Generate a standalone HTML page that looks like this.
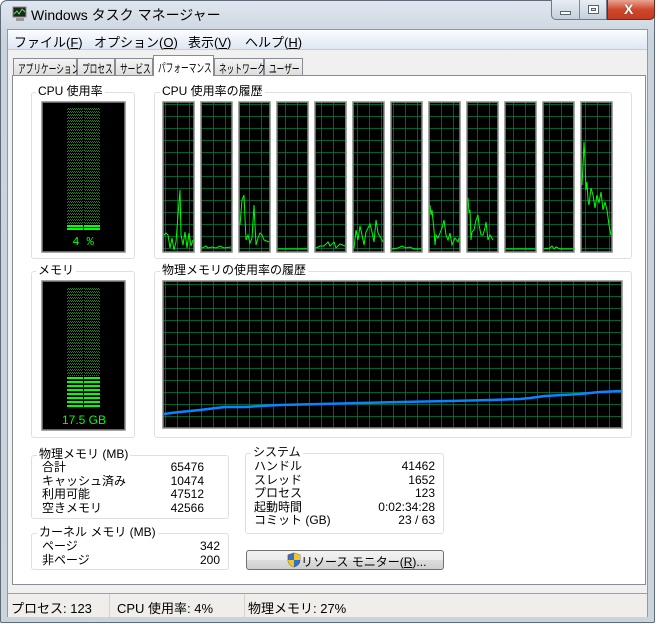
<!DOCTYPE html><html><head><meta charset="utf-8"><style>
*{margin:0;padding:0;box-sizing:border-box}
body{width:661px;height:624px;background:#fff;font-family:"Liberation Sans","Noto Sans CJK JP",sans-serif;font-size:12px;color:#000;position:relative;overflow:hidden}
.a{position:absolute}
.win{left:0;top:0;width:655px;height:623px;border:1px solid #5d6a78;border-radius:7px 7px 2px 2px;background:linear-gradient(#dfe6ee,#c9d3de 40px,#cbd3dc);}
.inner{left:7px;top:29px;width:641px;height:588px;background:#f0f0f0;border:1px solid #8e9aa8}
.menu{left:8px;top:30px;width:639px;height:20px;background:linear-gradient(#fbfcfe,#dfe7f4);border-bottom:1px solid #c5cdd8;font-size:13px}
.menu span{position:absolute;top:2px}
.tab{top:58px;height:18px;background:linear-gradient(#f4f4f4,#dcdcdc);border:1px solid #898c95;border-bottom:none;font-size:12px;white-space:nowrap;overflow:visible}
.tab span{position:absolute;left:4px;top:1px;white-space:nowrap;transform:scaleX(.64);transform-origin:0 0}
.pane{left:12px;top:75px;width:634px;height:510px;background:#fff;border:1px solid #898c95}
.grp{border:1px solid #dcdfe4;border-radius:3px}
.gl{background:#fff;padding:0 2px;font-size:12px;line-height:13px;white-space:nowrap}
.row{font-size:12px;line-height:13.5px;white-space:nowrap}
.status{left:8px;top:593px;width:639px;height:24px;background:#f0eeeb;border-top:1px solid #a0a0a0;font-size:13px}
</style></head><body>
<div class="a win"></div>
<svg class="a" style="left:11px;top:6px" width="16" height="16"><rect x="2" y="1" width="13" height="10" fill="#222" stroke="#888"/><polyline points="3,8 6,5 8,8 11,3 14,6" stroke="#3f3" fill="none"/><rect x="5" y="12" width="8" height="3" fill="#999"/></svg>
<div class="a" style="left:31px;top:5px;font-size:14px;color:#000">Windows タスク マネージャー</div>
<div class="a" style="left:551px;top:0;width:56px;height:20px;border:1px solid #6f7b8a;border-top:none;border-radius:0 0 0 5px;background:linear-gradient(#e9eef4,#c4cfdb)"></div>
<div class="a" style="left:579px;top:0;width:1px;height:20px;background:#7c8896"></div>
<div class="a" style="left:560px;top:11px;width:11px;height:4px;background:#fff;border:1px solid #5a6470"></div>
<div class="a" style="left:588px;top:5px;width:11px;height:9px;background:#fff;border:1px solid #5a6470"><div style="margin:2px;width:5px;height:3px;border:1px solid #5a6470;background:#dde"></div></div>
<div class="a" style="left:607px;top:0;width:48px;height:20px;border:1px solid #6a2a20;border-top:none;border-radius:0 0 5px 0;background:linear-gradient(#e8a493,#d0482c 50%,#c23b20)"></div>
<div class="a" style="left:624px;top:1px;color:#fff;font-weight:bold;font-size:14px;text-shadow:0 0 1px #333">X</div>
<div class="a inner"></div>
<div class="a menu"><span style="left:6px">ファイル(<u>F</u>)</span><span style="left:86px">オプション(<u>O</u>)</span><span style="left:180px">表示(<u>V</u>)</span><span style="left:237px">ヘルプ(<u>H</u>)</span></div>
<div class="a tab" style="left:13px;width:64px"><span>アプリケーション</span></div>
<div class="a tab" style="left:77px;width:38px"><span>プロセス</span></div>
<div class="a tab" style="left:115px;width:38px"><span>サービス</span></div>
<div class="a tab" style="left:153px;width:61px;top:55px;height:21px;background:#fff;z-index:2"><span style="top:3px">パフォーマンス</span></div>
<div class="a tab" style="left:214px;width:50px"><span>ネットワーク</span></div>
<div class="a tab" style="left:264px;width:39px"><span>ユーザー</span></div>
<div class="a pane"></div>
<div class="a grp" style="left:31px;top:92px;width:104px;height:167px"></div>
<div class="a gl" style="left:36px;top:85px">CPU 使用率</div>
<div class="a grp" style="left:154px;top:92px;width:478px;height:167px"></div>
<div class="a gl" style="left:160px;top:85px">CPU 使用率の履歴</div>
<div class="a grp" style="left:31px;top:271px;width:104px;height:167px"></div>
<div class="a gl" style="left:36px;top:264px">メモリ</div>
<div class="a grp" style="left:154px;top:271px;width:478px;height:167px"></div>
<div class="a gl" style="left:160px;top:264px">物理メモリの使用率の履歴</div>
<svg class="a" style="left:0;top:0" width="661" height="624">
<defs>
<pattern id="g" x="165" y="104" width="12" height="12" patternUnits="userSpaceOnUse"><rect width="12" height="12" fill="#000"/><path d="M0 0H12M0 0V12" stroke="#008040" stroke-width="1.5" fill="none"/></pattern>
<pattern id="d" x="0" y="0" width="2" height="3" patternUnits="userSpaceOnUse"><rect width="2" height="3" fill="#000"/><rect width="1" height="1" fill="#2a7a2a"/><rect x="1" y="1" width="1" height="1" fill="#2a7a2a"/></pattern>
</defs>
<rect x="42" y="102" width="83" height="150" fill="#000" stroke="#888" stroke-width="1.5"/>
<rect x="67" y="108" width="16" height="116" fill="url(#d)"/><rect x="84" y="108" width="16" height="116" fill="url(#d)"/>
<rect x="67" y="225" width="16" height="2" fill="#0f0"/><rect x="84" y="225" width="16" height="2" fill="#0f0"/>
<rect x="67" y="228" width="16" height="2" fill="#0f0"/><rect x="84" y="228" width="16" height="2" fill="#0f0"/>
<text x="83" y="245" fill="#0f0" font-size="12" text-anchor="middle" font-family="Liberation Mono">4 %</text>
<rect x="42" y="281" width="83" height="149" fill="#000" stroke="#888" stroke-width="1.5"/>
<rect x="67" y="287" width="16" height="89" fill="url(#d)"/><rect x="84" y="287" width="16" height="89" fill="url(#d)"/>
<g fill="#0f0">
<rect x="67" y="377" width="16" height="2"/><rect x="84" y="377" width="16" height="2"/>
<rect x="67" y="381" width="16" height="2"/><rect x="84" y="381" width="16" height="2"/>
<rect x="67" y="385" width="16" height="2"/><rect x="84" y="385" width="16" height="2"/>
<rect x="67" y="389" width="16" height="2"/><rect x="84" y="389" width="16" height="2"/>
<rect x="67" y="393" width="16" height="2"/><rect x="84" y="393" width="16" height="2"/>
<rect x="67" y="397" width="16" height="2"/><rect x="84" y="397" width="16" height="2"/>
<rect x="67" y="401" width="16" height="2"/><rect x="84" y="401" width="16" height="2"/>
<rect x="67" y="405" width="16" height="2"/><rect x="84" y="405" width="16" height="2"/>
</g>
<text x="84" y="424" fill="#0f0" font-size="12" text-anchor="middle">17.5 GB</text>
<g stroke="#888" stroke-width="1.5" fill="url(#g)">
<rect x="163" y="102" width="31" height="150"/><rect x="201" y="102" width="31" height="150"/><rect x="239" y="102" width="31" height="150"/><rect x="277" y="102" width="31" height="150"/><rect x="315" y="102" width="31" height="150"/><rect x="353" y="102" width="31" height="150"/><rect x="391" y="102" width="31" height="150"/><rect x="429" y="102" width="31" height="150"/><rect x="467" y="102" width="31" height="150"/><rect x="505" y="102" width="31" height="150"/><rect x="543" y="102" width="31" height="150"/><rect x="581" y="102" width="31" height="150"/>
</g>
<g stroke="#0f0" stroke-width="1" fill="none">
<polyline points="164,235 166,233 168,235 170,248 172,238 174,250 176,242 178,215 180,190 181,235 183,245 185,232 187,248 189,233 191,246 193,240"/>
<polyline points="202,248 206,246 208,248 212,247 216,248 220,246 224,248 231,247"/>
<polyline points="240,225 242,200 244,195 246,240 248,235 250,243 252,238 254,205 256,245 258,238 260,233 262,235 264,240 269,242"/>
<polyline points="278,249 307,249"/><polyline points="316,248 320,246 324,246 328,242 330,246 334,242 336,248 340,244 345,246"/>
<polyline points="354,248 356,230 358,240 360,226 362,235 364,245 366,232 370,224 372,232 374,242 376,220 378,233 382,240 383,242"/>
<polyline points="392,249 398,248 402,246 406,248 410,247 414,249 421,249"/>
<polyline points="430,205 431,215 432,210 434,230 435,245 436,235 438,238 440,233 442,228 444,220 446,235 448,240 450,233 452,245 455,238 458,242 459,238"/>
<polyline points="468,198 469,212 470,210 471,240 472,232 474,230 476,220 478,215 479,225 481,235 483,235 485,228 486,222 488,240 490,235 493,240"/>
<polyline points="506,249 535,249"/><polyline points="544,249 550,248 552,246 554,249 556,247 560,249 573,249"/>
<polyline points="582,185 583,165 584,142 585,160 586,190 587,182 588,200 589,205 591,188 593,195 595,208 597,195 599,203 601,192 603,210 605,202 607,210 609,225 611,235"/>
</g>
<rect x="163" y="281" width="459" height="147" fill="url(#g)" stroke="#888" stroke-width="1.5"/>
<polyline points="164,414 171,413 180,412 190,411 200,410 216,408 225,407 245,407 260,406 280,405 320,404 360,403 400,402 450,401 490,400 520,399 530,398 545,396 580,394 600,392 621,391" stroke="#0a84ff" stroke-width="2.5" fill="none"/>
</svg>
<div class="a grp" style="left:31px;top:455px;width:198px;height:64px"></div>
<div class="a gl" style="left:37px;top:448px">物理メモリ (MB)</div>
<div class="a row" style="left:42px;top:461px">合計<br>キャッシュ済み<br>利用可能<br>空きメモリ</div>
<div class="a row" style="left:170px;top:461px;width:34px;text-align:right">65476<br>10474<br>47512<br>42566</div>
<div class="a grp" style="left:31px;top:533px;width:198px;height:37px"></div>
<div class="a gl" style="left:37px;top:526px">カーネル メモリ (MB)</div>
<div class="a row" style="left:42px;top:540px">ページ<br>非ページ</div>
<div class="a row" style="left:170px;top:540px;width:50px;text-align:right">342<br>200</div>
<div class="a grp" style="left:245px;top:453px;width:199px;height:81px"></div>
<div class="a gl" style="left:251px;top:446px">システム</div>
<div class="a row" style="left:254px;top:460px">ハンドル<br>スレッド<br>プロセス<br>起動時間<br>コミット (GB)</div>
<div class="a row" style="left:370px;top:460px;width:65px;text-align:right">41462<br>1652<br>123<br>0:02:34:28<br>23 / 63</div>
<div class="a" style="left:246px;top:550px;width:198px;height:20px;border:1px solid #707070;border-radius:3px;background:linear-gradient(#f2f2f2,#ebebeb 50%,#dddddd 51%,#cfcfcf)"></div>
<svg class="a" style="left:287px;top:552px" width="14" height="16"><path d="M7 1L13 3V8C13 12 10 14 7 15C4 14 1 12 1 8V3Z" fill="#2e6fd8" stroke="#555" stroke-width=".7"/><path d="M7 1V8H13V3ZM1 8H7V15C4 14 1 12 1 8Z" fill="#f4c51c"/></svg>
<div class="a" style="left:301px;top:553px;font-size:12px">リソース モニター(<u>R</u>)...</div>
<div class="a status"><span class="a" style="left:3px;top:4px">プロセス: 123</span><span class="a" style="left:101px;top:0;width:1px;height:23px;background:#d5d2cc"></span><span class="a" style="left:109px;top:4px">CPU 使用率: 4%</span><span class="a" style="left:236px;top:0;width:1px;height:23px;background:#d5d2cc"></span><span class="a" style="left:240px;top:4px">物理メモリ: 27%</span></div>
</body></html>
